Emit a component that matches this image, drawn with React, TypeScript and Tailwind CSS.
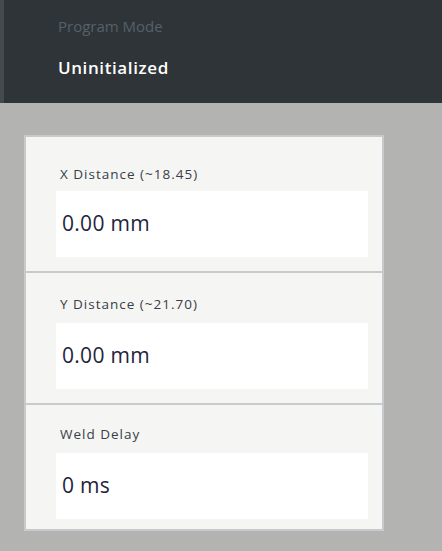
import React from "react";

const font = { fontFamily: '"Open Sans", "Noto Sans", sans-serif' };

function Field({ label, value, pt, mb, pb }: { label: string; value: string; pt: string; mb: string; pb: string }) {
  return (
    <div className={`pl-[30px] pr-[14px] ${pt} ${pb}`}>
      <div className={`text-[13.5px] leading-[18px] text-[#383e48] tracking-[1px] pl-[4px] ${mb}`}>{label}</div>
      <div className="h-[66px] bg-white flex items-center pl-[6px] text-[21px] tracking-[0.3px] text-[#23243a]">{value}</div>
    </div>
  );
}

export default function App() {
  return (
    <div className="w-[442px] h-[551px] bg-[#b3b3b1] overflow-hidden" style={font}>
      <div className="h-[103px] bg-[#2e3438] border-l-4 border-[#434b50] pl-[54px] pt-[16px]">
        <div className="text-[15px] leading-[20px] text-[#56616a]">Program Mode</div>
        <div className="mt-[21px] text-[17px] leading-[22px] font-semibold tracking-[0.6px] text-white">Uninitialized</div>
      </div>
      <div className="ml-[24px] mt-[32px] w-[360px] border-2 border-[#c8cbcd] bg-[#f5f5f3]">
        <Field label="X Distance (~18.45)" value="0.00 mm" pt="pt-[28px]" mb="mb-[8px]" pb="pb-[14px]" />
        <div className="border-t-2 border-[#c8cbcd]" />
        <Field label="Y Distance (~21.70)" value="0.00 mm" pt="pt-[22px]" mb="mb-[10px]" pb="pb-[14px]" />
        <div className="border-t-2 border-[#c8cbcd]" />
        <Field label="Weld Delay" value="0 ms" pt="pt-[20px]" mb="mb-[10px]" pb="pb-[10px]" />
      </div>
    </div>
  );
}
